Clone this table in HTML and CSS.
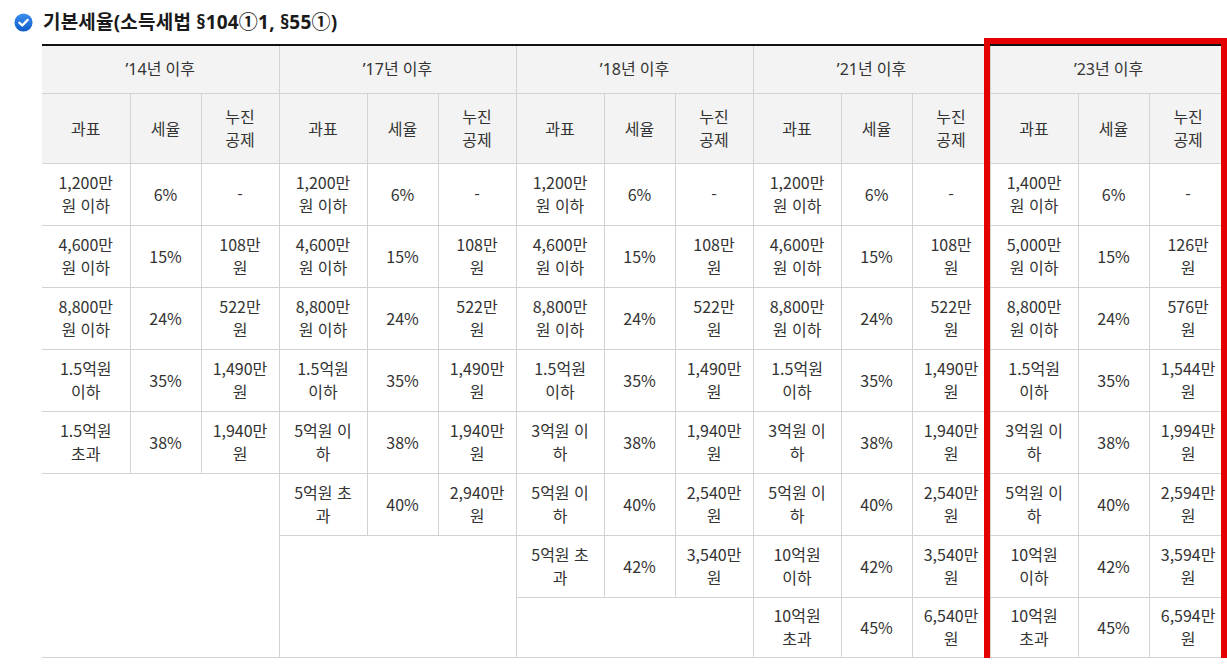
FILE: index.html
```html
<!DOCTYPE html>
<html lang="ko">
<head>
<meta charset="utf-8">
<title>기본세율</title>
<link rel="stylesheet" href="styles.css">
</head>
<body>
<div class="title">
  <svg class="check" width="19" height="19" viewBox="0 0 20 20">
    <defs>
      <linearGradient id="g" x1="0" y1="0" x2="0" y2="1">
        <stop offset="0" stop-color="#3d8ff0"/>
        <stop offset="1" stop-color="#0b5cc8"/>
      </linearGradient>
    </defs>
    <circle cx="10" cy="10" r="9.5" fill="url(#g)"/>
    <path d="M5.6 10.2 L8.7 13.2 L14.4 7.2" fill="none" stroke="#fff" stroke-width="2.4" stroke-linecap="round" stroke-linejoin="round"/>
  </svg>
  <h2 class="title-text">기본세율(소득세법 §104①1, §55①)</h2>
</div>
<div class="table-wrap">
<table class="rates">
  <colgroup>
    <col class="c1"><col class="c2"><col class="c3">
    <col class="c1"><col class="c2"><col class="c3">
    <col class="c1"><col class="c2"><col class="c3">
    <col class="c1"><col class="c2"><col class="c3">
    <col class="c1"><col class="c2"><col class="c3">
  </colgroup>
  <thead>
    <tr class="h1">
      <th colspan="3">’14년 이후</th>
      <th colspan="3">’17년 이후</th>
      <th colspan="3">’18년 이후</th>
      <th colspan="3">’21년 이후</th>
      <th colspan="3">’23년 이후</th>
    </tr>
    <tr class="h2">
      <th>과표</th><th>세율</th><th>누진<br>공제</th>
      <th>과표</th><th>세율</th><th>누진<br>공제</th>
      <th>과표</th><th>세율</th><th>누진<br>공제</th>
      <th>과표</th><th>세율</th><th>누진<br>공제</th>
      <th>과표</th><th>세율</th><th>누진<br>공제</th>
    </tr>
  </thead>
  <tbody>
    <tr>
      <td>1,200만<br>원 이하</td><td>6%</td><td>-</td>
      <td>1,200만<br>원 이하</td><td>6%</td><td>-</td>
      <td>1,200만<br>원 이하</td><td>6%</td><td>-</td>
      <td>1,200만<br>원 이하</td><td>6%</td><td>-</td>
      <td>1,400만<br>원 이하</td><td>6%</td><td>-</td>
    </tr>
    <tr>
      <td>4,600만<br>원 이하</td><td>15%</td><td>108만<br>원</td>
      <td>4,600만<br>원 이하</td><td>15%</td><td>108만<br>원</td>
      <td>4,600만<br>원 이하</td><td>15%</td><td>108만<br>원</td>
      <td>4,600만<br>원 이하</td><td>15%</td><td>108만<br>원</td>
      <td>5,000만<br>원 이하</td><td>15%</td><td>126만<br>원</td>
    </tr>
    <tr>
      <td>8,800만<br>원 이하</td><td>24%</td><td>522만<br>원</td>
      <td>8,800만<br>원 이하</td><td>24%</td><td>522만<br>원</td>
      <td>8,800만<br>원 이하</td><td>24%</td><td>522만<br>원</td>
      <td>8,800만<br>원 이하</td><td>24%</td><td>522만<br>원</td>
      <td>8,800만<br>원 이하</td><td>24%</td><td>576만<br>원</td>
    </tr>
    <tr>
      <td>1.5억원<br>이하</td><td>35%</td><td>1,490만<br>원</td>
      <td>1.5억원<br>이하</td><td>35%</td><td>1,490만<br>원</td>
      <td>1.5억원<br>이하</td><td>35%</td><td>1,490만<br>원</td>
      <td>1.5억원<br>이하</td><td>35%</td><td>1,490만<br>원</td>
      <td>1.5억원<br>이하</td><td>35%</td><td>1,544만<br>원</td>
    </tr>
    <tr>
      <td>1.5억원<br>초과</td><td>38%</td><td>1,940만<br>원</td>
      <td>5억원 이<br>하</td><td>38%</td><td>1,940만<br>원</td>
      <td>3억원 이<br>하</td><td>38%</td><td>1,940만<br>원</td>
      <td>3억원 이<br>하</td><td>38%</td><td>1,940만<br>원</td>
      <td>3억원 이<br>하</td><td>38%</td><td>1,994만<br>원</td>
    </tr>
    <tr>
      <td class="empty" colspan="3" rowspan="3"></td>
      <td>5억원 초<br>과</td><td>40%</td><td>2,940만<br>원</td>
      <td>5억원 이<br>하</td><td>40%</td><td>2,540만<br>원</td>
      <td>5억원 이<br>하</td><td>40%</td><td>2,540만<br>원</td>
      <td>5억원 이<br>하</td><td>40%</td><td>2,594만<br>원</td>
    </tr>
    <tr>
      <td class="empty" colspan="3" rowspan="2"></td>
      <td>5억원 초<br>과</td><td>42%</td><td>3,540만<br>원</td>
      <td>10억원<br>이하</td><td>42%</td><td>3,540만<br>원</td>
      <td>10억원<br>이하</td><td>42%</td><td>3,594만<br>원</td>
    </tr>
    <tr class="last">
      <td class="empty" colspan="3"></td>
      <td>10억원<br>초과</td><td>45%</td><td>6,540만<br>원</td>
      <td>10억원<br>초과</td><td>45%</td><td>6,594만<br>원</td>
    </tr>
  </tbody>
</table>
<div class="highlight"></div>
</div>
</body>
</html>
```

FILE: styles.css
```css
html, body {
  margin: 0;
  padding: 0;
  overflow: hidden;
  background: #fff;
}

body {
  font-family: "Noto Sans CJK KR", "Noto Sans", sans-serif;
  color: #333;
}

.title {
  display: flex;
  align-items: center;
  height: 44px;
  padding-left: 14px;
  gap: 10px;
}

.check {
  display: block;
  flex: none;
}

.title-text {
  margin: 0;
  font-family: "Noto Sans", "Noto Sans CJK KR", sans-serif;
  font-size: 19px;
  font-weight: 700;
  color: #1a1a1a;
  letter-spacing: 0.2px;
  line-height: 24px;
}

.table-wrap {
  position: relative;
  margin-left: 42px;
  width: 1185px;
}

.rates {
  width: 1185px;
  table-layout: fixed;
  border-collapse: collapse;
  border-top: 2px solid #111;
  font-size: 16px;
  line-height: 23px;
}

.c1 { width: 88px; }
.c2 { width: 71px; }
.c3 { width: 78px; }

.rates th,
.rates td {
  border: 1px solid #d3d3d3;
  text-align: center;
  vertical-align: middle;
  font-weight: 400;
  color: #333;
  padding: 7px 6px 8px;
}

.rates tr:first-child th {
  border-top: 2px solid #111;
}

.rates th:first-child,
.rates tbody tr td:first-child {
  border-left: none;
}

.rates th {
  background: #f3f3f3;
  padding: 11px 6px 12px;
}

.rates .h1 th {
  font-family: "Noto Sans", "Noto Sans CJK KR", sans-serif;
  padding: 12px 6px 12px;
}

.rates .last td {
  padding-top: 6px;
  padding-bottom: 7px;
}

.rates td.empty {
  background: #fff;
}

.highlight {
  position: absolute;
  left: 942px;
  right: 0;
  top: -6px;
  bottom: -6px;
  border: 6px solid #e50000;
  pointer-events: none;
}
```
